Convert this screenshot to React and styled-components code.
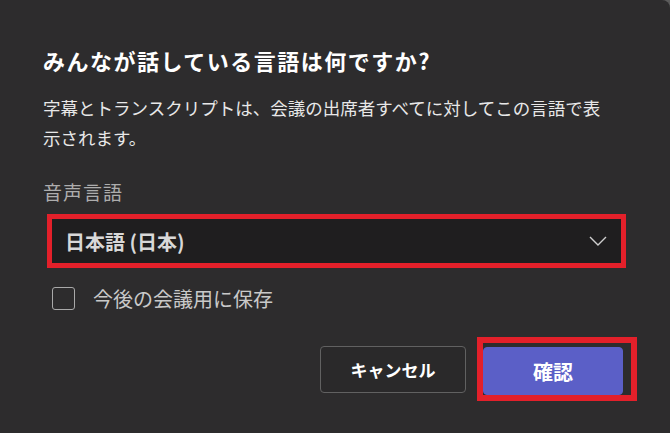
import React, { useState } from "react";
import styled, { createGlobalStyle } from "styled-components";

const colors = {
  page: "#5b5b5b",
  dialog: "#2d2c2d",
  field: "#1f1e1f",
  text: "#ffffff",
  body: "#e8e8e8",
  muted: "#adadad",
  border: "#616161",
  brand: "#5b5fc7",
  mark: "#e3202a",
};

const GlobalStyle = createGlobalStyle`
  html, body {
    margin: 0;
    padding: 0;
    background: ${colors.page};
  }
  body {
    font-family: "Noto Sans CJK JP", "Noto Sans", sans-serif;
  }
`;

const Dialog = styled.div`
  width: 670px;
  height: 433px;
  box-sizing: border-box;
  background: ${colors.dialog};
  border-top-right-radius: 8px;
  padding: 45px 33px 0 43px;
  display: flex;
  flex-direction: column;
`;

const Title = styled.h2`
  margin: 0;
  font-size: 22px;
  line-height: 30px;
  font-weight: 700;
  color: ${colors.text};
  letter-spacing: 1.5px;
`;

const Description = styled.p`
  margin: 18px 0 0;
  max-width: 563px;
  font-size: 17.5px;
  line-height: 30px;
  color: ${colors.body};
`;

const FieldLabel = styled.label`
  margin-top: 26px;
  font-size: 19px;
  line-height: 26px;
  letter-spacing: 1px;
  color: ${colors.muted};
`;

const Select = styled.button`
  margin: 9px 11px 0 4px;
  height: 54px;
  box-sizing: border-box;
  border: 5px solid ${colors.mark};
  background: ${colors.field};
  display: flex;
  align-items: center;
  justify-content: space-between;
  padding: 0 14px 0 13px;
  font-family: inherit;
  font-size: 20px;
  font-weight: 700;
  color: #d8d8d8;
  cursor: pointer;
`;

const CheckRow = styled.label`
  margin: 18px 0 0 9px;
  display: flex;
  align-items: center;
  gap: 18px;
  height: 24px;
  font-size: 20px;
  color: #c9c9c9;
  cursor: pointer;
`;

const Box = styled.span`
  width: 23px;
  height: 23px;
  box-sizing: border-box;
  border: 1.5px solid #a9a9a9;
  border-radius: 3px;
  background: ${(p) => (p.$checked ? colors.brand : "transparent")};
`;

const Footer = styled.div`
  margin-top: 27px;
  display: flex;
  justify-content: flex-end;
  align-items: center;
  gap: 11px;
`;

const Button = styled.button`
  width: ${(p) => p.$width}px;
  height: ${(p) => p.$height}px;
  box-sizing: border-box;
  border-radius: 4px;
  border: 1px solid ${(p) => (p.$primary ? colors.brand : colors.border)};
  background: ${(p) => (p.$primary ? colors.brand : "#2a292a")};
  color: #ffffff;
  font-family: inherit;
  font-weight: 700;
  font-size: ${(p) => p.$size}px;
  cursor: pointer;
`;

const Highlight = styled.div`
  border: 6px solid ${colors.mark};
  padding: 4px 8px 0 0;
  display: flex;
`;

const Chevron = () => (
  <svg width="18" height="10" viewBox="0 0 18 10" fill="none">
    <polyline points="1,1 9,9 17,1" stroke="#cfcfcf" strokeWidth="1.4" />
  </svg>
);

export default function App() {
  const [save, setSave] = useState(false);

  return (
    <>
      <GlobalStyle />
      <Dialog>
        <Title>みんなが話している言語は何ですか?</Title>
        <Description>
          字幕とトランスクリプトは、会議の出席者すべてに対してこの言語で表示されます。
        </Description>
        <FieldLabel>音声言語</FieldLabel>
        <Select>
          <span>日本語 (日本)</span>
          <Chevron />
        </Select>
        <CheckRow onClick={() => setSave(!save)}>
          <Box $checked={save} />
          今後の会議用に保存
        </CheckRow>
        <Footer>
          <Button $width={146} $height={47} $size={17}>
            キャンセル
          </Button>
          <Highlight>
            <Button $primary $width={140} $height={48} $size={20}>
              確認
            </Button>
          </Highlight>
        </Footer>
      </Dialog>
    </>
  );
}
